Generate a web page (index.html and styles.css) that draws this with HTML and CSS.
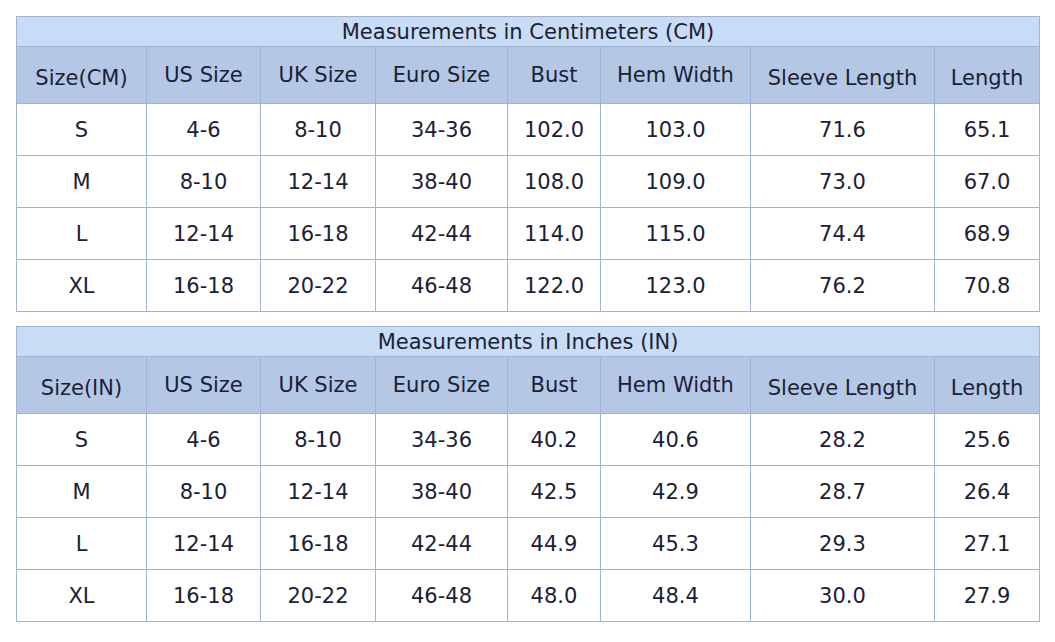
FILE: index.html
```html
<!DOCTYPE html>
<html>
<head>
<meta charset="utf-8">
<link rel="stylesheet" href="styles.css">
</head>
<body>
<table class="chart">
  <colgroup>
    <col class="c1"><col class="c2"><col class="c3"><col class="c4"><col class="c5"><col class="c6"><col class="c7"><col class="c8">
  </colgroup>
  <tr class="title"><td colspan="8">Measurements in Centimeters (CM)</td></tr>
  <tr class="head">
    <th class="low">Size(CM)</th><th>US Size</th><th>UK Size</th><th>Euro Size</th><th>Bust</th><th>Hem Width</th><th class="low">Sleeve Length</th><th class="low">Length</th>
  </tr>
  <tr><td>S</td><td>4-6</td><td>8-10</td><td>34-36</td><td>102.0</td><td>103.0</td><td>71.6</td><td>65.1</td></tr>
  <tr><td>M</td><td>8-10</td><td>12-14</td><td>38-40</td><td>108.0</td><td>109.0</td><td>73.0</td><td>67.0</td></tr>
  <tr><td>L</td><td>12-14</td><td>16-18</td><td>42-44</td><td>114.0</td><td>115.0</td><td>74.4</td><td>68.9</td></tr>
  <tr><td>XL</td><td>16-18</td><td>20-22</td><td>46-48</td><td>122.0</td><td>123.0</td><td>76.2</td><td>70.8</td></tr>
</table>
<table class="chart">
  <colgroup>
    <col class="c1"><col class="c2"><col class="c3"><col class="c4"><col class="c5"><col class="c6"><col class="c7"><col class="c8">
  </colgroup>
  <tr class="title"><td colspan="8">Measurements in Inches (IN)</td></tr>
  <tr class="head">
    <th class="low">Size(IN)</th><th>US Size</th><th>UK Size</th><th>Euro Size</th><th>Bust</th><th>Hem Width</th><th class="low">Sleeve Length</th><th class="low">Length</th>
  </tr>
  <tr><td>S</td><td>4-6</td><td>8-10</td><td>34-36</td><td>40.2</td><td>40.6</td><td>28.2</td><td>25.6</td></tr>
  <tr><td>M</td><td>8-10</td><td>12-14</td><td>38-40</td><td>42.5</td><td>42.9</td><td>28.7</td><td>26.4</td></tr>
  <tr><td>L</td><td>12-14</td><td>16-18</td><td>42-44</td><td>44.9</td><td>45.3</td><td>29.3</td><td>27.1</td></tr>
  <tr><td>XL</td><td>16-18</td><td>20-22</td><td>46-48</td><td>48.0</td><td>48.4</td><td>30.0</td><td>27.9</td></tr>
</table>
</body>
</html>
```

FILE: styles.css
```css
html, body {
  margin: 0;
  padding: 0;
  background: #ffffff;
}
body {
  padding: 16px 0 0 16px;
  font-family: "DejaVu Sans", Verdana, sans-serif;
  font-size: 21px;
  color: #1b2134;
}
.chart {
  border-collapse: collapse;
  table-layout: fixed;
  width: 1024px;
  margin-bottom: 14px;
}
.chart td, .chart th {
  border: 1px solid #9fb4d4;
  text-align: center;
  vertical-align: middle;
  padding: 0;
  font-weight: normal;
  height: 51px;
  line-height: 24px;
}
.c1 { width: 130px; }
.c2 { width: 114px; }
.c3 { width: 115px; }
.c4 { width: 132px; }
.c5 { width: 93px; }
.c6 { width: 150px; }
.c7 { width: 184px; }
.c8 { width: 105px; }
.title td {
  background: #c9dcf6;
  height: 27px;
  padding-top: 2px;
  line-height: 27px;
}
.head th {
  background: #b4c8e6;
  height: 56px;
}
.head th.low {
  height: 50px;
  padding-top: 6px;
}
```
